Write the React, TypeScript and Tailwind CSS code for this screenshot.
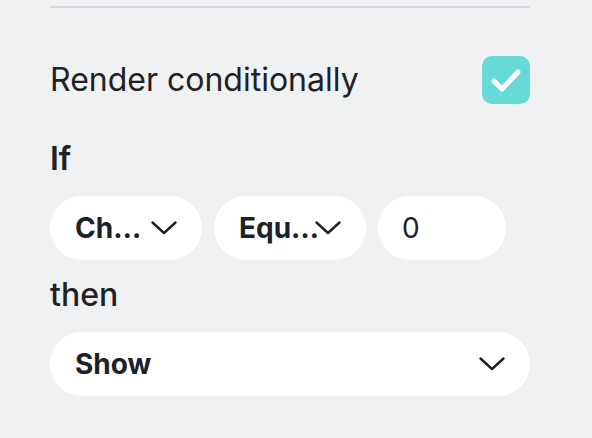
import React from 'react';

const Chevron: React.FC = () => (
  <svg width="26" height="14" viewBox="0 0 26 14" fill="none" className="shrink-0">
    <polyline
      points="1.5,1.5 13,12 24.5,1.5"
      stroke="#202124"
      strokeWidth="2.4"
      strokeLinecap="round"
      strokeLinejoin="round"
    />
  </svg>
);

interface SelectPillProps {
  label: string;
  className?: string;
}

const SelectPill: React.FC<SelectPillProps> = ({ label, className = '' }) => (
  <div className={`flex h-16 items-center rounded-full bg-white pl-[25px] pr-[25px] ${className}`}>
    <span className="min-w-[76px] flex-1 whitespace-nowrap text-[28px] font-bold text-[#202124]">{label}</span>
    <Chevron />
  </div>
);

export default function App() {
  return (
    <div className="min-h-screen w-[592px] bg-[#f0f1f3] pl-[50px] pr-[62px] font-['Inter',sans-serif] text-[#202124]">
      <div className="pt-[6px]">
        {/* Divider */}
        <div className="h-[2px] bg-[#d5d6d9]" />

        {/* Render conditionally */}
        <div className="mt-[48px] flex items-center justify-between">
          <span className="text-[32px] leading-[48px]">Render conditionally</span>
          <div className="flex h-12 w-12 items-center justify-center rounded-[10px] bg-[#66d9d9]">
            <svg width="48" height="48" viewBox="0 0 48 48" fill="none">
              <polyline
                points="12,25 20,33 36,16"
                stroke="white"
                strokeWidth="5"
                strokeLinecap="round"
                strokeLinejoin="round"
              />
            </svg>
          </div>
        </div>

        {/* If */}
        <div className="mt-[35px] text-[32px] font-semibold leading-[40px]">If</div>
        <div className="mt-[17px] flex gap-3">
          <SelectPill label="Ch…" className="w-[152px]" />
          <SelectPill label="Equ…" className="w-[152px]" />
          <div className="flex h-16 w-[128px] items-center rounded-full bg-white pl-[24px] text-[28px]">0</div>
        </div>

        {/* then */}
        <div className="mt-[15px] text-[32px] font-medium leading-[40px]">then</div>
        <div className="mt-[17px]">
          <SelectPill label="Show" className="w-full" />
        </div>
      </div>
    </div>
  );
}
